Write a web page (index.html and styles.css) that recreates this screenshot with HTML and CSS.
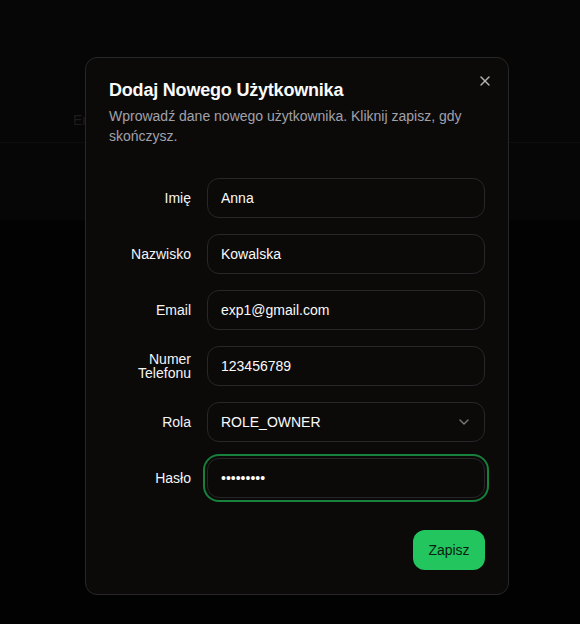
FILE: index.html
```html
<!DOCTYPE html>
<html lang="pl">
<head>
<meta charset="utf-8">
<title>Dodaj Nowego Użytkownika</title>
<link rel="stylesheet" href="styles.css">
</head>
<body>
<div class="page">
  <div class="table-head"><span class="th">Email</span></div>
  <div class="table-row"></div>
</div>
<div class="overlay">
  <div class="dialog" role="dialog">
    <button class="close" aria-label="Zamknij">
      <svg width="16" height="16" viewBox="0 0 24 24" fill="none" stroke="currentColor" stroke-width="2" stroke-linecap="round" stroke-linejoin="round"><path d="M18 6 6 18"/><path d="m6 6 12 12"/></svg>
    </button>
    <div class="header">
      <h2 class="title">Dodaj Nowego Użytkownika</h2>
      <p class="desc">Wprowadź dane nowego użytkownika. Kliknij zapisz, gdy skończysz.</p>
    </div>
    <form class="form">
      <label class="label">Imię</label>
      <input class="input" type="text" value="Anna">
      <label class="label">Nazwisko</label>
      <input class="input" type="text" value="Kowalska">
      <label class="label">Email</label>
      <input class="input" type="text" value="exp1@gmail.com">
      <label class="label">Numer Telefonu</label>
      <input class="input" type="text" value="123456789">
      <label class="label">Rola</label>
      <button type="button" class="input select"><span>ROLE_OWNER</span>
        <svg width="16" height="16" viewBox="0 0 24 24" fill="none" stroke="currentColor" stroke-width="2" stroke-linecap="round" stroke-linejoin="round"><path d="m6 9 6 6 6-6"/></svg>
      </button>
      <label class="label">Hasło</label>
      <input class="input focused" type="password" value="123456789">
    </form>
    <div class="footer">
      <button type="button" class="btn">Zapisz</button>
    </div>
  </div>
</div>
</body>
</html>
```
FILE: styles.css
```css
* { box-sizing: border-box; }
html, body { margin: 0; padding: 0; }
body {
  background: #020202;
  font-family: "Liberation Sans", Arial, sans-serif;
  color: #fafafa;
  height: 624px;
  overflow: hidden;
}
.page { width: 100%; }
.table-head {
  height: 142px;
  background: #060606;
  padding: 111px 0 0 73px;
}
.th { color: #1d1d1d; font-size: 14px; line-height: 16px; }
.table-row {
  height: 78px;
  background: #060606;
  border-top: 1px solid #0d0d0d;
}
.overlay {
  position: fixed;
  inset: 0;
}
.dialog {
  position: absolute;
  left: 85px;
  top: 57px;
  width: 424px;
  background: #0c0a09;
  border: 1px solid #27272a;
  border-radius: 12px;
  padding: 23px 23px 24px;
  display: flex;
  flex-direction: column;
  gap: 16px;
}
.close {
  position: absolute;
  right: 15px;
  top: 15px;
  width: 16px;
  height: 16px;
  padding: 0;
  border: 0;
  background: none;
  color: #b4b4b8;
  display: flex;
}
.header { display: flex; flex-direction: column; gap: 7px; }
.title {
  margin: 0;
  font-size: 18px;
  line-height: 18px;
  font-weight: 700;
  color: #fafafa;
  letter-spacing: -0.2px;
}
.desc {
  margin: 0;
  font-size: 14px;
  line-height: 20px;
  color: #a1a1aa;
}
.form {
  display: grid;
  grid-template-columns: 82px 1fr;
  column-gap: 16px;
  row-gap: 16px;
  align-items: center;
  padding: 16px 0;
}
.label {
  text-align: right;
  font-size: 14px;
  line-height: 14px;
  font-weight: 500;
  color: #f4f4f5;
}
.input {
  height: 40px;
  width: 100%;
  background: #0c0a09;
  border: 1px solid #27272a;
  border-radius: 12px;
  padding: 0 13px;
  font: inherit;
  font-size: 14px;
  color: #fafafa;
  outline: none;
}
.select {
  display: flex;
  align-items: center;
  justify-content: space-between;
  text-align: left;
  padding-right: 12px;
}
.select svg { color: #7a7a7e; }
.focused {
  box-shadow: 0 0 0 2px #0c0a09, 0 0 0 4px #16803c;
}
.footer { display: flex; justify-content: flex-end; }
.btn {
  height: 40px;
  width: 72px;
  border: 0;
  border-radius: 12px;
  background: #22c55e;
  color: #0a1f12;
  font: inherit;
  font-size: 14px;
}
```
